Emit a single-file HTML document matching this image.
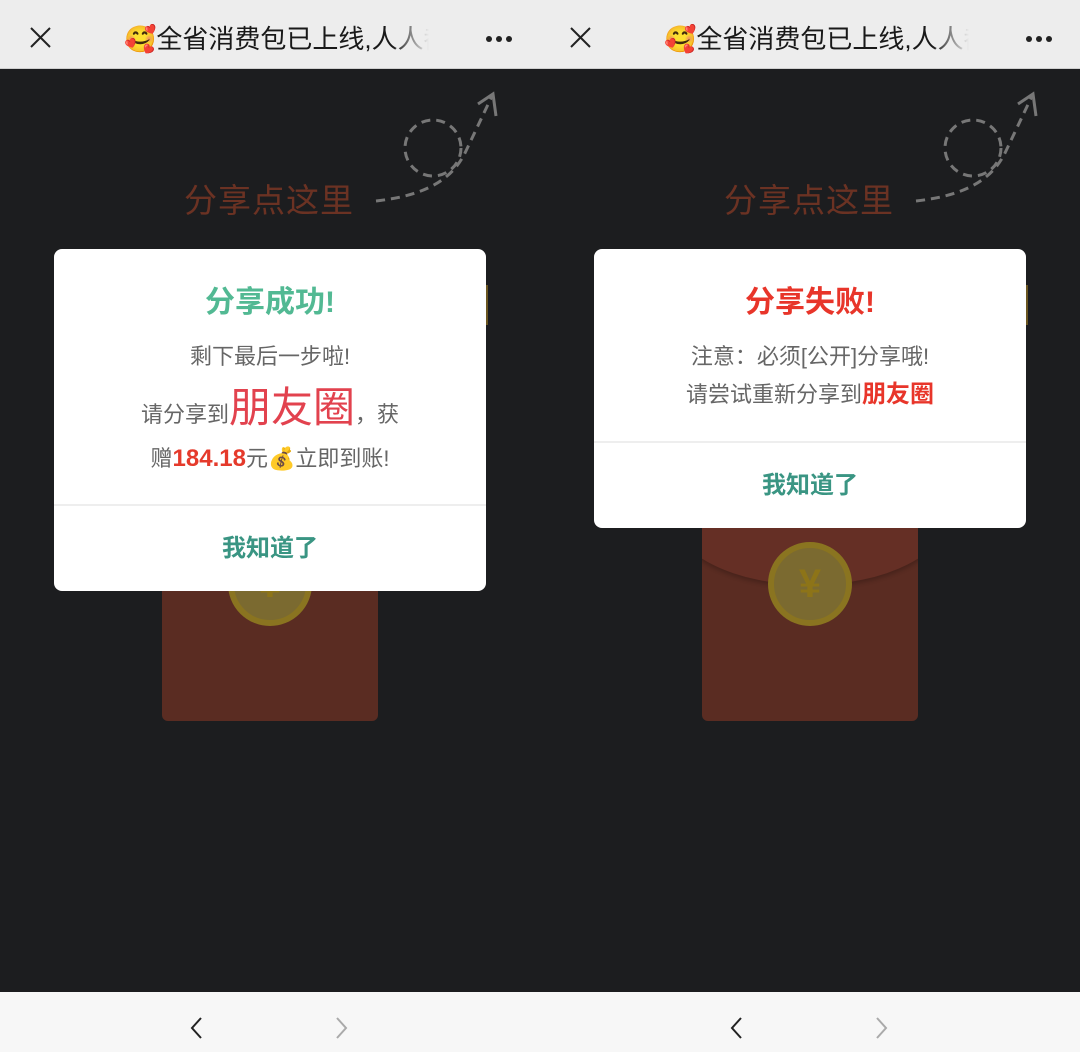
<!DOCTYPE html>
<html><head><meta charset="utf-8"><style>
*{margin:0;padding:0;box-sizing:border-box}
body{width:1080px;height:1052px;overflow:hidden;background:#1c1d1f;font-family:"Liberation Sans","Noto Sans CJK SC",sans-serif;position:relative}
.p{position:absolute;top:0;width:540px;height:1052px;overflow:hidden;background:#1c1d1f}
.hd{position:absolute;left:0;top:0;width:540px;height:69px;background:#ededed;border-bottom:1px solid #cfcfcf}
.ttl{position:absolute;left:124px;top:19px;font-size:26px;color:#191919;white-space:nowrap;width:305px;overflow:hidden;-webkit-mask-image:linear-gradient(90deg,#000 88%,transparent)}
.dots{position:absolute;left:486px;top:29px}
.dots i{display:inline-block;width:6px;height:6px;border-radius:50%;background:#222;margin-right:4px}
.ft{position:absolute;left:0;top:992px;width:540px;height:60px;background:#f7f7f7}
.here{position:absolute;left:184px;top:174px;font-size:33px;color:#6b3223;letter-spacing:1px}
.env{position:absolute;left:162px;width:216px;top:505px;height:216px;background:#5a2c22;border-radius:6px;overflow:hidden}
.flap{position:absolute;left:-30px;top:-120px;width:276px;height:200px;border-radius:0 0 50% 50%/0 0 35% 35%;background:#652f25;box-shadow:0 3px 4px rgba(0,0,0,.2)}
.coin{position:absolute;left:66px;top:37px;width:84px;height:84px;border-radius:50%;background:#7b6a30;border:6px solid #8a7420;color:#8d7418;font-weight:bold;font-size:40px;text-align:center;line-height:72px}
.m{position:absolute;left:54px;width:432px;top:249px;background:#fff;border-radius:8px;text-align:center;overflow:hidden}
.t{font-size:30px;font-weight:bold;margin-top:33px;line-height:42px}
.l{font-size:22px;color:#666;line-height:38px}
.btn{border-top:2px solid #eee;height:87px;line-height:85px;font-size:24px;font-weight:bold;color:#3a9583}
.yb{position:absolute;left:480px;top:285px;width:8px;height:40px;background:#6a5520}
</style></head><body>

<div class="p" style="left:0">
 <div class="hd"><svg style="position:absolute;left:30px;top:27px" width="21" height="21"><path d="M1 1L20 20M20 1L1 20" stroke="#222" stroke-width="2"/></svg>
 <div class="ttl">🥰全省消费包已上线,人人都有</div><div class="dots"><i></i><i></i><i></i></div></div>
 <div class="here">分享点这里</div>
 <svg style="position:absolute;left:370px;top:88px" width="130" height="120" fill="none" stroke="#777" stroke-width="3" stroke-dasharray="9 6"><circle cx="63" cy="60" r="28"/><path d="M6 113C50 108 80 95 95 65L122 8"/><path d="M108 16L123 6L126 28" stroke-dasharray="none"/></svg>
 <div class="yb"></div>
 <div class="env"><div class="flap"></div><div class="coin">¥</div></div>
 <div class="m">
  <div class="t" style="color:#52b993">分享成功!</div>
  <div class="l" style="margin-top:14px">剩下最后一步啦!</div>
  <div class="l" style="line-height:56px;margin-top:4px">请分享到<span style="font-size:42px;color:#e2424e">朋友圈</span>，获</div>
  <div class="l" style="line-height:32px;margin-top:0">赠<b style="color:#e53a2b;font-size:24px">184.18</b>元💰立即到账!</div>
  <div class="btn" style="margin-top:29px">我知道了</div>
 </div>
 <div class="ft"><svg style="position:absolute;left:190px;top:25px" width="12" height="22" fill="none" stroke="#222" stroke-width="2"><path d="M11 1L2 11L11 21"/></svg><svg style="position:absolute;left:336px;top:25px" width="12" height="22" fill="none" stroke="#aaa" stroke-width="2"><path d="M1 1L10 11L1 21"/></svg></div>
</div>

<div class="p" style="left:540px">
 <div class="hd"><svg style="position:absolute;left:30px;top:27px" width="21" height="21"><path d="M1 1L20 20M20 1L1 20" stroke="#222" stroke-width="2"/></svg>
 <div class="ttl">🥰全省消费包已上线,人人都有</div><div class="dots"><i></i><i></i><i></i></div></div>
 <div class="here">分享点这里</div>
 <svg style="position:absolute;left:370px;top:88px" width="130" height="120" fill="none" stroke="#777" stroke-width="3" stroke-dasharray="9 6"><circle cx="63" cy="60" r="28"/><path d="M6 113C50 108 80 95 95 65L122 8"/><path d="M108 16L123 6L126 28" stroke-dasharray="none"/></svg>
 <div class="yb"></div>
 <div class="env"><div class="flap"></div><div class="coin">¥</div></div>
 <div class="m">
  <div class="t" style="color:#e8352a">分享失败!</div>
  <div class="l" style="margin-top:14px">注意：必须[公开]分享哦!</div>
  <div class="l">请尝试重新分享到<b style="color:#e8352a;font-size:24px">朋友圈</b></div>
  <div class="btn" style="margin-top:27px">我知道了</div>
 </div>
 <div class="ft"><svg style="position:absolute;left:190px;top:25px" width="12" height="22" fill="none" stroke="#222" stroke-width="2"><path d="M11 1L2 11L11 21"/></svg><svg style="position:absolute;left:336px;top:25px" width="12" height="22" fill="none" stroke="#aaa" stroke-width="2"><path d="M1 1L10 11L1 21"/></svg></div>
</div>
</body></html>
